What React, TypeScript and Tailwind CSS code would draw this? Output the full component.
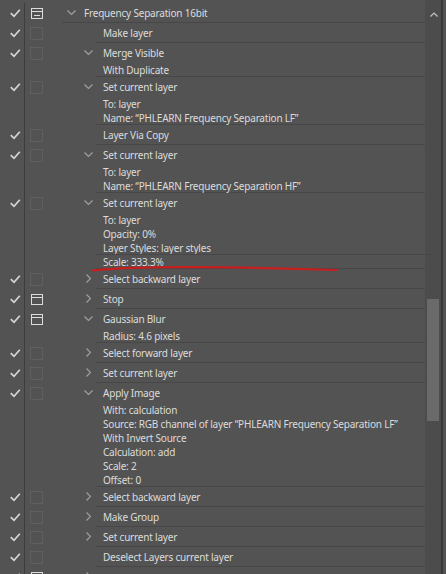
import React from "react";

type Icon = "empty" | "dialog" | "partial";

type Step = {
  label: string;
  icon: Icon;
  chevron?: "open" | "closed";
  details?: string[];
  ruleAt?: number;
};

const steps: Step[] = [
  { label: "Make layer", icon: "empty" },
  { label: "Merge Visible", icon: "empty", chevron: "open", details: ["With Duplicate"] },
  {
    label: "Set current layer",
    icon: "empty",
    chevron: "open",
    details: ["To: layer", "Name:  \u201cPHLEARN Frequency Separation LF\u201d"],
  },
  { label: "Layer Via Copy", icon: "empty" },
  {
    label: "Set current layer",
    icon: "empty",
    chevron: "open",
    details: ["To: layer", "Name:  \u201cPHLEARN Frequency Separation HF\u201d"],
  },
  {
    label: "Set current layer",
    icon: "empty",
    chevron: "open",
    details: ["To: layer", "Opacity: 0%", "Layer Styles: layer styles", "Scale: 333.3%"],
    ruleAt: 3,
  },
  { label: "Select backward layer", icon: "empty", chevron: "closed" },
  { label: "Stop", icon: "dialog", chevron: "closed" },
  { label: "Gaussian Blur", icon: "dialog", chevron: "open", details: ["Radius: 4.6 pixels"] },
  { label: "Select forward layer", icon: "empty", chevron: "closed" },
  { label: "Set current layer", icon: "empty", chevron: "closed" },
  {
    label: "Apply Image",
    icon: "empty",
    chevron: "open",
    details: [
      "With: calculation",
      "Source: RGB channel of layer \u201cPHLEARN Frequency Separation LF\u201d",
      "With Invert Source",
      "Calculation: add",
      "Scale: 2",
      "Offset: 0",
    ],
  },
  { label: "Select backward layer", icon: "empty", chevron: "closed" },
  { label: "Make Group", icon: "empty", chevron: "closed" },
  { label: "Set current layer", icon: "empty", chevron: "closed" },
  { label: "Deselect Layers current layer", icon: "empty" },
  // next step, scrolled mostly out of view
  { label: "", icon: "dialog", chevron: "closed" },
];

function Check() {
  return (
    <svg width="24" height="20" viewBox="0 0 24 20" className="block">
      <path d="M10.8 10.2 L14 13.3 L19.8 6.8" fill="none" stroke="#d6d6d6" strokeWidth="1.7" />
    </svg>
  );
}

function StepIcon({ kind }: { kind: Icon }) {
  if (kind === "empty") {
    return <div className="w-[13px] h-[13px] border border-[#5f5f5f]" />;
  }
  return (
    <svg width="13" height="13" viewBox="0 0 13 13" className="block">
      <rect x="1.5" y="1.5" width="11" height="10" fill="none" stroke="#dcdcdc" strokeWidth="1" />
      <line x1="1.5" y1="4.5" x2="12.5" y2="4.5" stroke="#dcdcdc" strokeWidth="1" />
      {kind === "partial" && <line x1="4" y1="8.5" x2="10" y2="8.5" stroke="#dcdcdc" strokeWidth="1" />}
    </svg>
  );
}

function Chevron({ dir }: { dir: "open" | "closed" }) {
  if (dir === "open") {
    return (
      <svg width="9" height="5" viewBox="0 0 9 5" className="block">
        <path d="M0.5 0.5 L4.5 4.5 L8.5 0.5" fill="none" stroke="#a2a2a2" strokeWidth="1.1" />
      </svg>
    );
  }
  return (
    <svg width="5" height="9" viewBox="0 0 5 9" className="block">
      <path d="M0.5 0.5 L4.5 4.5 L0.5 8.5" fill="none" stroke="#a2a2a2" strokeWidth="1.1" />
    </svg>
  );
}

function Gutter({ icon }: { icon: Icon }) {
  return (
    <>
      <div className="w-[25px] shrink-0 border-r border-[#3d3d3d]">
        <Check />
      </div>
      <div className="w-[25px] shrink-0 pt-[4px] pl-[5px]">
        <StepIcon kind={icon} />
      </div>
    </>
  );
}

function StepRow({ step }: { step: Step }) {
  return (
    <div className="flex">
      <Gutter icon={step.icon} />
      <div className="w-[30px] shrink-0" />
      <div className="w-[16px] h-[19px] shrink-0 flex items-center justify-center">
        {step.chevron && <Chevron dir={step.chevron} />}
      </div>
      <div className="flex-1 flex flex-col border-b border-[#474747] pl-[7px]">
        <div className="h-[19px] pt-[2px] flex items-center">{step.label}</div>
        {step.details?.map((d, i) => (
          <div
            key={i}
            className={
              i === step.ruleAt
                ? "h-[14px] pt-[1px] leading-[13px] border-t border-[#474747] -mx-[7px] px-[7px]"
                : "h-[14px] pt-[1px] leading-[14px]"
            }
          >
            {d}
          </div>
        ))}
      </div>
    </div>
  );
}

export default function App() {
  return (
    <div className="h-[574px] w-[446px] overflow-hidden bg-[#535353] flex text-[10px] tracking-[-0.2px] text-[#dcdcdc] font-['Noto_Sans',sans-serif]">
      <div className="relative w-[425px] shrink-0 pt-[3px]">
        <div className="flex">
          <Gutter icon="partial" />
          <div className="w-[12px] shrink-0" />
          <div className="flex-1 h-[20px] flex items-center border-b border-[#474747]">
            <div className="w-[22px] shrink-0 pl-[5px]">
              <Chevron dir="open" />
            </div>
            <span className="pt-[2px]">Frequency Separation 16bit</span>
          </div>
        </div>
        {steps.map((s, i) => (
          <StepRow key={i} step={s} />
        ))}

        {/* red pen stroke under the scale value */}
        <svg
          className="absolute left-[90px] top-[260px]"
          width="252"
          height="14"
          viewBox="0 0 252 14"
        >
          <path
            d="M3 10.5 C 25 8, 60 6.8, 110 7.2 S 205 8.6, 247 10"
            fill="none"
            stroke="#c81e1e"
            strokeWidth="2.2"
            strokeLinecap="round"
          />
        </svg>
      </div>

      {/* scrollbar */}
      <div className="w-[16px] shrink-0 bg-[#4c4c4c] flex flex-col items-center">
        <svg width="8" height="5" viewBox="0 0 8 5" className="mt-[12px] ml-[2px] block">
          <path d="M0.5 4.5 L4 1 L7.5 4.5" fill="none" stroke="#c4c4c4" strokeWidth="1.2" />
        </svg>
        <div className="mt-[282px] w-[12px] h-[122px] bg-[#6a6a6a]" />
      </div>
      <div className="w-[2px] shrink-0 bg-[#3a3a3a]" />
      <div className="flex-1" />
    </div>
  );
}
